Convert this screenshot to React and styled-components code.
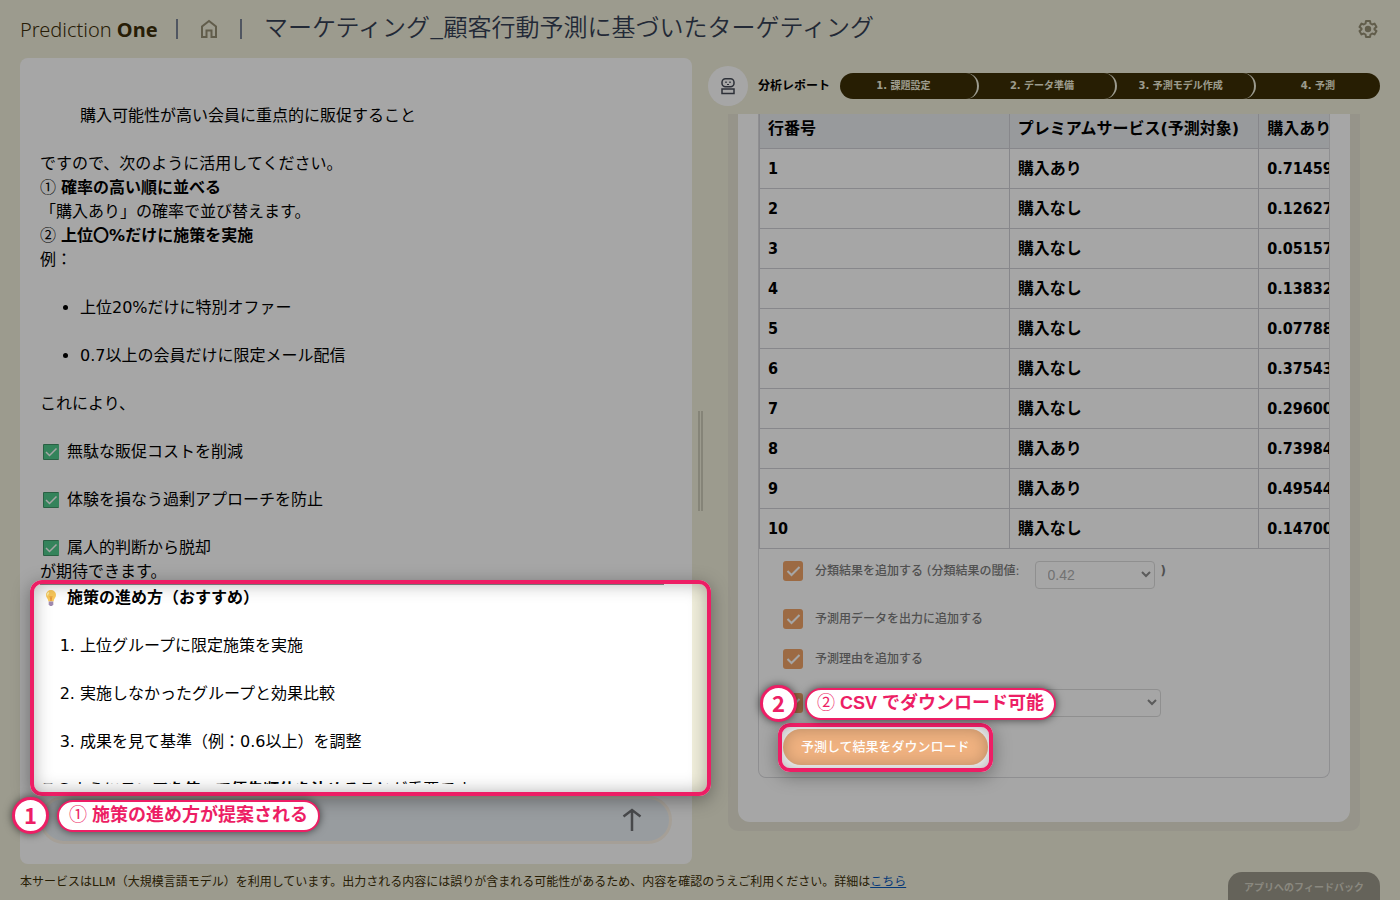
import React from 'react'
import styled, { createGlobalStyle } from 'styled-components'

const GlobalStyle = createGlobalStyle`
  * {
    box-sizing: border-box;
  }

  body {
    margin: 0;
    background: #f0eedb;
    color: #000;
    font-family: 'DejaVu Sans', 'Noto Sans CJK JP', sans-serif;
    font-size: 16px;
    line-height: 24px;
  }
`

const Page = styled.div`
  position: relative;
  display: flex;
  flex-direction: column;
  height: 100vh;
  overflow: hidden;
`

const Header = styled.header`
  display: flex;
  align-items: center;
  flex: none;
  height: 58px;
  padding: 0 22px 0 20px;
  color: #3d2f0a;
`

const Logo = styled.div`
  width: 134px;
  font-family: 'Noto Sans', sans-serif;
  font-size: 20px;
  line-height: 28px;
  font-weight: 300;
  white-space: nowrap;
  padding-top: 2px;

  b {
    font-weight: 700;
  }
`

const Bar = styled.span`
  width: 2px;
  height: 20px;
  margin: 0 22px;
  background: #7b8496;
`

const IconButton = styled.button`
  display: flex;
  padding: 0;
  border: 0;
  background: none;
  color: ${props => props.$color || '#968f74'};
`

const Title = styled.h1`
  flex: 1;
  margin: 0;
  padding-bottom: 6px;
  color: #353f54;
  font-family: 'Noto Sans CJK JP', sans-serif;
  font-size: 24px;
  line-height: 32px;
  font-weight: 350;
  white-space: nowrap;
`

const Main = styled.main`
  display: grid;
  grid-template-columns: minmax(0, 1fr) 16px minmax(0, 1fr);
  grid-template-rows: minmax(0, 1fr);
  flex: 1;
  min-height: 0;
  padding: 0 20px;
`

const Chat = styled.section`
  display: flex;
  flex-direction: column;
  padding: 0 20px 20px;
  background: #fff;
  border-radius: 8px;
`

const Messages = styled.div`
  flex: 1;
  min-height: 0;
  overflow: hidden;
  padding-top: 46px;

  p {
    margin: 0;
  }

  ul,
  ol {
    margin: 24px 0;
    padding-left: 40px;
  }

  li + li {
    margin-top: 24px;
  }

  hr {
    height: 1px;
    margin: 0 8px 1px 0;
    border: 0;
    background: #8a8a8a;
  }
`

const Indent = styled.p`
  && {
    margin-bottom: 24px;
    padding-left: 40px;
  }
`

const Num = styled.span`
  font-family: 'Noto Sans CJK JP', sans-serif;
  font-weight: 400;
  line-height: 1;
`

const Check = styled.p`
  display: flex;
  align-items: center;
  gap: 5px;

  && {
    margin-top: ${props => (props.$gap ? '24px' : '0')};
  }
`

const InputBox = styled.form`
  display: flex;
  align-items: center;
  flex: none;
  height: 48px;
  margin-top: 12px;
  padding: 0 27px;
  border: 3px solid #fdf5e8;
  border-radius: 24px;
  background: #eaf0f5;

  input {
    flex: 1;
    border: 0;
    background: none;
    outline: none;
  }
`

const Splitter = styled.div`
  align-self: center;
  width: 5px;
  height: 100px;
  margin-left: 6px;
  border: solid #cccbb9;
  border-width: 0 2px;
`

const Report = styled.section`
  display: flex;
  flex-direction: column;
  padding: 8px 0 33px;
`

const ReportHead = styled.div`
  display: flex;
  align-items: center;
  flex: none;
  height: 40px;
  margin-bottom: 8px;
`

const Avatar = styled.span`
  display: flex;
  align-items: center;
  justify-content: center;
  width: 40px;
  height: 40px;
  border-radius: 50%;
  background: #fff;
`

const ReportName = styled.h2`
  margin: 0 10px;
  font-size: 12px;
  line-height: 16px;
  font-weight: 700;
  white-space: nowrap;
`

const Steps = styled.ol`
  display: flex;
  flex: 1;
  margin: 0;
  padding: 0;
  list-style: none;
  border-radius: 13px;
  background: #3c2f06;
`

const Step = styled.li`
  flex: ${props => (props.$last ? '0 1 124px' : '1 1 0')};
  height: 26px;
  padding-right: ${props => (props.$last ? '0' : '10px')};
  border-right: ${props => (props.$last ? '0' : '2px solid #f0eedb')};
  border-radius: 13px;
  color: #f0eedb;
  font-size: 10px;
  line-height: 26px;
  font-weight: 700;
  text-align: center;
  white-space: nowrap;
`

const ReportFrame = styled.div`
  flex: 1;
  min-height: 0;
  margin-left: 20px;
  margin-right: 20px;
  padding: 0 10px 9px;
  border-radius: 0 0 10px 10px;
  background: #e6e4d4;
`

const ReportCard = styled.div`
  height: 100%;
  padding: 0 20px 44px;
  border-radius: 0 0 12px 12px;
  background: #fff;
`

const Result = styled.div`
  height: 100%;
  overflow: hidden;
  border: 1px solid #dcdcdf;
  border-top: 0;
  border-radius: 0 0 8px 8px;
`

const Table = styled.table`
  width: 750px;
  table-layout: fixed;
  border-collapse: collapse;
  font-weight: 700;

  th,
  td {
    height: 40px;
    padding: 2px 8px 0;
    border: 1px solid #d0d0d6;
    text-align: left;
    white-space: nowrap;
  }

  td {
    font-family: 'DejaVu Sans Condensed', 'DejaVu Sans', 'Noto Sans CJK JP', sans-serif;
  }

  th {
    height: 34px;
    padding: 0 8px 4px;
    border-top: 0;
    background: #eaedf0;
  }
`

const Options = styled.div`
  display: flex;
  flex-direction: column;
  padding-left: 24px;
`

const Option = styled.div`
  display: flex;
  align-items: center;
  height: ${props => props.$height}px;
  color: #7c7c7c;
  font-size: 12px;
  font-weight: 700;

  &:last-of-type {
    margin-top: 8px;
  }

  label {
    margin-left: 12px;
    font-weight: 500;
    white-space: nowrap;
  }
`

const Tick = styled.span`
  display: grid;
  flex: none;
  width: 20px;
  height: 20px;

  input,
  svg {
    grid-area: 1 / 1;
    width: 20px;
    height: 20px;
    margin: 0;
  }

  svg {
    pointer-events: none;
  }

  input {
    appearance: none;
    border-radius: 3px;
    background: #f0a468;
  }
`

const SelectWrap = styled.span`
  display: grid;
  align-items: center;
  width: ${props => props.$width}px;
  margin: ${props => props.$margin};

  select,
  svg {
    grid-area: 1 / 1;
  }

  svg {
    justify-self: end;
    margin-right: 4px;
    pointer-events: none;
  }

  select {
    appearance: none;
    height: 28px;
    padding: 0 12px;
    border: 1px solid #dcdcdc;
    border-radius: 4px;
    background: #fff;
    color: #b0b0b0;
    font-family: 'Liberation Sans', sans-serif;
    font-size: 14px;
  }
`

const Download = styled.button`
  align-self: flex-start;
  height: 36px;
  margin-top: 4px;
  padding: 0 18px 2px;
  border: 0;
  border-radius: 18px;
  background: #f0b280;
  color: #fff;
  font-family: 'Noto Sans CJK JP', sans-serif;
  font-size: 13px;
  font-weight: 500;
  white-space: nowrap;
`

const Footer = styled.footer`
  display: flex;
  justify-content: space-between;
  flex: none;
  height: 36px;
  padding: 8px 20px 0;
  color: #3c2f06;
  font-size: 12px;
  line-height: 20px;

  a {
    color: #0a58b8;
  }
`

const Feedback = styled.button`
  width: 152px;
  height: 28px;
  padding: 0;
  border: 0;
  border-radius: 14px 14px 0 0;
  background: #9b988a;
  color: #d4d1c3;
  font-family: 'Noto Sans CJK JP', sans-serif;
  font-size: 10px;
  font-weight: 700;
`

const Shade = styled.div`
  position: absolute;
  inset: 0;
  background: rgba(0, 0, 0, 0.35);
  pointer-events: none;
  clip-path: path(
    evenodd,
    'M0 0H9999V9999H0Z M42 580H699a12 12 0 0 1 12 12V784a12 12 0 0 1 -12 12H42a12 12 0 0 1 -12 -12V592a12 12 0 0 1 12 -12Z M790 723H981a12 12 0 0 1 12 12V760a12 12 0 0 1 -12 12H790a12 12 0 0 1 -12 -12V735a12 12 0 0 1 12 -12Z'
  );
`

const Spot = styled.div`
  position: absolute;
  left: ${props => props.$x}px;
  top: ${props => props.$y}px;
  width: ${props => props.$w}px;
  height: ${props => props.$h}px;
  border: 4px solid #ed1e65;
  border-radius: 12px;
  box-shadow: 0 4px 18px rgba(0, 0, 0, 0.35), inset 0 0 18px rgba(0, 0, 0, 0.3);
  pointer-events: none;
`

const Callout = styled.div`
  position: absolute;
  left: ${props => props.$x}px;
  top: ${props => props.$y}px;
  display: flex;
  align-items: center;
  gap: 8px;
  color: #ed1e65;
  font-family: 'Liberation Sans', 'Noto Sans CJK JP', sans-serif;
  font-weight: 700;
  white-space: nowrap;
`

const Badge = styled.span`
  width: 37px;
  height: 37px;
  border: 3px solid #ed1e65;
  border-radius: 50%;
  background: #fff;
  box-shadow: 0 0 8px rgba(0, 0, 0, 0.6);
  font-family: 'Noto Sans CJK JP', sans-serif;
  font-size: 22px;
  line-height: 29px;
  text-align: center;
`

const Bubble = styled.span`
  height: 32px;
  padding: 0 10px;
  border: 2px solid #ed1e65;
  border-radius: 16px;
  background: #fff;
  box-shadow: 0 0 8px rgba(0, 0, 0, 0.6);
  font-size: 18px;
  line-height: 27px;
`

const HomeIcon = () => (
  <svg width="18" height="20" viewBox="0 0 18 20" fill="none" stroke="currentColor" strokeWidth="2">
    <path d="M2 18V7.500L9 2l7 5.500V18h-4.500v-6.500h-5V18Z" />
  </svg>
)

const GearIcon = () => (
  <svg width="20" height="20" viewBox="0 0 20 20" fill="none" stroke="currentColor" strokeWidth="2" strokeLinejoin="round">
    <path d="M8 2h4l.5 2.500 1.700 1 2.300-.9 2 3.300-2 1.600v1l2 1.600-2 3.300-2.300-.9-1.700 1L12 18H8l-.5-2.500-1.700-1-2.300.9-2-3.300 2-1.600v-1l-2-1.600 2-3.300 2.300.9 1.700-1Z" />
    <circle cx="10" cy="10" r="3.200" fill="currentColor" stroke="none" />
  </svg>
)

const BotIcon = () => (
  <svg width="16" height="18" viewBox="0 0 16 18" fill="none" stroke="#454b57" strokeWidth="1.500">
    <rect x="2" y="1.700" width="12" height="8" rx="3.500" />
    <rect x="2" y="12" width="12" height="4.500" />
    <path d="M5.300 5.200h1.400M9.300 5.200h1.400" />
    <path d="M7 7.500h2" strokeWidth="1" />
  </svg>
)

const CheckEmoji = () => (
  <svg width="22" height="16" viewBox="0 0 22 16">
    <rect x="3" y="0" width="16" height="16" rx="1" fill="#3f9467" />
    <rect x="4" y="1" width="15" height="14" fill="#50c98c" />
    <path d="M6 8l3.500 3.500L16.500 4.500" fill="none" stroke="#fff" strokeWidth="1.500" />
  </svg>
)

const BulbEmoji = () => (
  <svg width="22" height="16" viewBox="0 0 22 16">
    <path d="M11 0a5 5 0 0 0-5 5c0 2.500 2 3.500 2.500 6.500h5C14 8.500 16 7.500 16 5a5 5 0 0 0-5-5Z" fill="#fbc95a" />
    <path d="M9 2.500a3 3 0 0 0-1.500 3" stroke="#fff0a8" strokeWidth="1.500" fill="none" />
    <path d="M10 6l1 5 1-5" stroke="#e89a3c" strokeWidth="1" fill="none" />
    <path d="M8.700 11.500h4.600v3l-1.300 1.500h-2l-1.300-1.500Z" fill="#a08bb0" />
  </svg>
)

const ArrowIcon = () => (
  <svg width="20" height="24" viewBox="0 0 20 24" fill="none" stroke="currentColor" strokeWidth="2.500">
    <path d="M10 23V2M1.500 8.500L10 2l8.500 6.500" />
  </svg>
)

const Chevron = () => (
  <svg width="10" height="7" viewBox="0 0 10 7" fill="none" stroke="#8c8c8c" strokeWidth="2">
    <path d="M1 1l4 4 4-4" />
  </svg>
)

const CheckBox = ({ id, label }) => (
  <Tick>
    <input id={id} type="checkbox" defaultChecked aria-label={label} />
    <svg viewBox="0 0 20 20" fill="none" stroke="#fff" strokeWidth="2">
      <path d="M4.500 10l4 4L16.500 6" />
    </svg>
  </Tick>
)

const steps = ['1. 課題設定', '2. データ準備', '3. 予測モデル作成', '4. 予測']

const rows = [
  ['購入あり', '0.71459'],
  ['購入なし', '0.12627'],
  ['購入なし', '0.05157'],
  ['購入なし', '0.13832'],
  ['購入なし', '0.07788'],
  ['購入なし', '0.37543'],
  ['購入なし', '0.29600'],
  ['購入あり', '0.73984'],
  ['購入あり', '0.49544'],
  ['購入なし', '0.14700'],
]

function App () {
  return (
    <>
      <GlobalStyle />
      <Page>
        <Header>
          <Logo>Prediction <b>One</b></Logo>
          <Bar />
          <IconButton aria-label="ホーム"><HomeIcon /></IconButton>
          <Bar />
          <Title>マーケティング_顧客行動予測に基づいたターゲティング</Title>
          <IconButton aria-label="設定"><GearIcon /></IconButton>
        </Header>

        <Main>
          <Chat>
            <Messages>
              <Indent>購入可能性が高い会員に重点的に販促すること</Indent>
              <p>ですので、次のように活用してください。</p>
              <p><Num>①</Num> <b>確率の高い順に並べる</b></p>
              <p>「購入あり」の確率で並び替えます。</p>
              <p><Num>②</Num> <b>上位〇%だけに施策を実施</b></p>
              <p>例：</p>
              <ul>
                <li>上位20%だけに特別オファー</li>
                <li>0.7以上の会員だけに限定メール配信</li>
              </ul>
              <p>これにより、</p>
              <Check $gap><CheckEmoji />無駄な販促コストを削減</Check>
              <Check $gap><CheckEmoji />体験を損なう過剰アプローチを防止</Check>
              <Check $gap><CheckEmoji />属人的判断から脱却</Check>
              <p>が期待できます。</p>
              <hr />
              <Check><BulbEmoji /><b>施策の進め方（おすすめ）</b></Check>
              <ol>
                <li>上位グループに限定施策を実施</li>
                <li>実施しなかったグループと効果比較</li>
                <li>成果を見て基準（例：0.6以上）を調整</li>
              </ol>
              <p>このように<b>スコアを使って優先順位を決めること</b>が重要です。</p>
            </Messages>
            <InputBox>
              <input type="text" aria-label="メッセージ" />
              <IconButton type="button" aria-label="送信" $color="#6f7074"><ArrowIcon /></IconButton>
            </InputBox>
          </Chat>

          <Splitter />

          <Report>
            <ReportHead>
              <Avatar><BotIcon /></Avatar>
              <ReportName>分析レポート</ReportName>
              <Steps>
                {
                  steps.map((step, i) => <Step key={step} $last={i === steps.length - 1}>{step}</Step>)
                }
              </Steps>
            </ReportHead>
            <ReportFrame>
              <ReportCard>
                <Result>
                  <Table>
                    <thead>
                      <tr>
                        <th>行番号</th>
                        <th>プレミアムサービス(予測対象)</th>
                        <th>購入あり</th>
                      </tr>
                    </thead>
                    <tbody>
                      {
                        rows.map((row, i) => {
                          return (
                            <tr key={i}>
                              <td>{i + 1}</td>
                              <td>{row[0]}</td>
                              <td>{row[1]}</td>
                            </tr>
                          )
                        })
                      }
                    </tbody>
                  </Table>
                  <Options>
                    <Option $height={44}>
                      <CheckBox id="classify" />
                      <label htmlFor="classify">分類結果を追加する (分類結果の閾値:</label>
                      <SelectWrap $width={120} $margin="8px 6px 0 15px">
                        <select aria-label="閾値"><option>0.42</option></select>
                        <Chevron />
                      </SelectWrap>
                      )
                    </Option>
                    <Option $height={52}>
                      <CheckBox id="source" />
                      <label htmlFor="source">予測用データを出力に追加する</label>
                    </Option>
                    <Option $height={28}>
                      <CheckBox id="reason" />
                      <label htmlFor="reason">予測理由を追加する</label>
                    </Option>
                    <Option $height={44}>
                      <CheckBox id="format" label="出力形式を指定する" />
                      <SelectWrap $width={346} $margin="0 0 0 12px">
                        <select aria-label="形式"><option /></select>
                        <Chevron />
                      </SelectWrap>
                    </Option>
                    <Download>予測して結果をダウンロード</Download>
                  </Options>
                </Result>
              </ReportCard>
            </ReportFrame>
          </Report>
        </Main>

        <Footer>
          <span>
            本サービスはLLM（大規模言語モデル）を利用しています。出力される内容には誤りが含まれる可能性があるため、内容を確認のうえご利用ください。詳細は<a href="#detail">こちら</a>
          </span>
          <Feedback>アプリへのフィードバック</Feedback>
        </Footer>

        <Shade />
        <Spot $x={30} $y={580} $w={681} $h={216} />
        <Spot $x={778} $y={723} $w={215} $h={49} />
        <Callout $x={12} $y={797}>
          <Badge>1</Badge>
          <Bubble><Num>①</Num> 施策の進め方が提案される</Bubble>
        </Callout>
        <Callout $x={760} $y={685}>
          <Badge>2</Badge>
          <Bubble><Num>②</Num> CSV でダウンロード可能</Bubble>
        </Callout>
      </Page>
    </>
  )
}

export default App
